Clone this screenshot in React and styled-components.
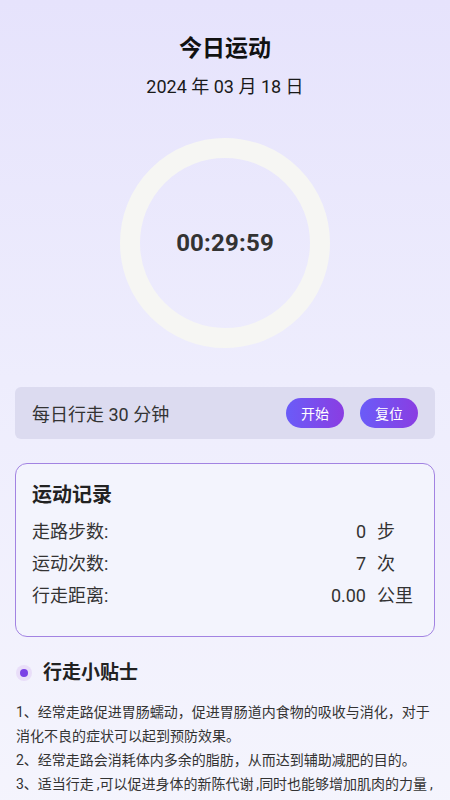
import React from "react";
import styled, { createGlobalStyle } from "styled-components";

const Global = createGlobalStyle`
  html, body { margin: 0; padding: 0; }
  body {
    font-family: Roboto, "Noto Sans CJK SC", sans-serif;
    background: linear-gradient(180deg, #e6e3fc 0%, #eeedfd 45%, #f5f5fd 100%);
    min-height: 100vh;
    color: #222;
  }
  * { box-sizing: border-box; }
`;

const Page = styled.div`
  display: flex;
  flex-direction: column;
  padding: 34px 15px 20px;
`;

const Title = styled.h1`
  margin: 0;
  text-align: center;
  font-size: 23px;
  line-height: 30px;
  font-weight: 700;
  color: #111;
`;

const DateText = styled.div`
  margin-top: 10px;
  text-align: center;
  font-size: 18px;
  line-height: 26px;
  color: #1a1a1a;
`;

const RingWrap = styled.div`
  display: flex;
  justify-content: center;
  margin-top: 38px;
`;

const Ring = styled.div`
  width: 210px;
  height: 210px;
  border-radius: 50%;
  border: 20px solid #f6f6f3;
  display: flex;
  align-items: center;
  justify-content: center;
`;

const Time = styled.div`
  font-size: 24px;
  font-weight: 700;
  color: #333;
  letter-spacing: 0.2px;
`;

const Bar = styled.div`
  margin-top: 39px;
  height: 52px;
  background: #dcdbf0;
  border-radius: 6px;
  display: flex;
  align-items: center;
  padding: 0 17px;
  gap: 16px;
`;

const BarText = styled.div`
  flex: 1;
  font-size: 18px;
  color: #333;
`;

const PillButton = styled.button`
  border: none;
  width: 58px;
  height: 30px;
  border-radius: 15px;
  background: linear-gradient(90deg, #6a5cf8 0%, #8a3de2 100%);
  color: #fff;
  font-family: inherit;
  font-size: 14px;
  padding: 0;
`;

const Card = styled.div`
  margin-top: 24px;
  border: 1px solid #a283e2;
  border-radius: 12px;
  background: #f3f4fd;
  padding: 16px 21px 24px 16px;
`;

const CardTitle = styled.div`
  font-size: 20px;
  line-height: 30px;
  font-weight: 700;
  color: #222;
  margin-bottom: 6px;
`;

const Row = styled.div`
  display: grid;
  grid-template-columns: 1fr auto 36px;
  column-gap: 11px;
  font-size: 18px;
  line-height: 32px;
  color: #333;
`;

const Value = styled.span`
  text-align: right;
`;

const TipsHeader = styled.div`
  margin-top: 22px;
  display: flex;
  align-items: center;
  gap: 11px;
  padding-left: 1px;
`;

const Dot = styled.span`
  width: 16px;
  height: 16px;
  border-radius: 50%;
  background: #e9def9;
  display: flex;
  align-items: center;
  justify-content: center;
  &::after {
    content: "";
    width: 8px;
    height: 8px;
    border-radius: 50%;
    background: #7a40e6;
  }
`;

const TipsTitle = styled.div`
  font-size: 19px;
  line-height: 28px;
  font-weight: 700;
  color: #222;
`;

const TipsText = styled.p`
  margin: 13px 0 0;
  padding-left: 1px;
  font-size: 14px;
  line-height: 24px;
  color: #333;
`;

const records = [
  { label: "走路步数:", value: "0", unit: "步" },
  { label: "运动次数:", value: "7", unit: "次" },
  { label: "行走距离:", value: "0.00", unit: "公里" },
];

export default function App() {
  return (
    <>
      <Global />
      <Page>
        <Title>今日运动</Title>
        <DateText>2024 年 03 月 18 日</DateText>
        <RingWrap>
          <Ring>
            <Time>00:29:59</Time>
          </Ring>
        </RingWrap>
        <Bar>
          <BarText>每日行走 30 分钟</BarText>
          <PillButton>开始</PillButton>
          <PillButton>复位</PillButton>
        </Bar>
        <Card>
          <CardTitle>运动记录</CardTitle>
          {records.map((r) => (
            <Row key={r.label}>
              <span>{r.label}</span>
              <Value>{r.value}</Value>
              <span>{r.unit}</span>
            </Row>
          ))}
        </Card>
        <TipsHeader>
          <Dot />
          <TipsTitle>行走小贴士</TipsTitle>
        </TipsHeader>
        <TipsText>
          1、经常走路促进胃肠蠕动，促进胃肠道内食物的吸收与消化，对于消化不良的症状可以起到预防效果。
          <br />
          2、经常走路会消耗体内多余的脂肪，从而达到辅助减肥的目的。
          <br />
          3、适当行走{"\u2009,"}可以促进身体的新陈代谢{"\u2009,"}同时也能够增加肌肉的力量{"\u2009,"}从而增强体质。
        </TipsText>
      </Page>
    </>
  );
}
